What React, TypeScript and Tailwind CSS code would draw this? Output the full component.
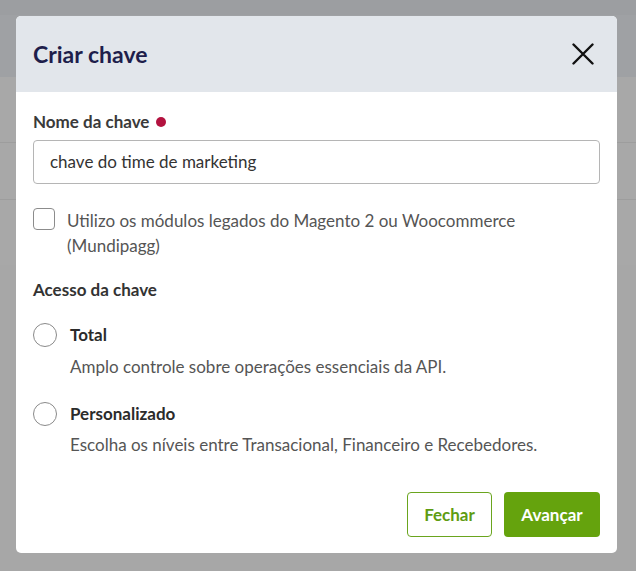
import React from "react";

export default function App() {
  return (
    <div
      className="relative h-[571px] w-full overflow-hidden bg-[#a7a7a7]"
      style={{ fontFamily: "Lato, 'Noto Sans', sans-serif" }}
    >
      {/* dimmed page behind */}
      <div className="h-[15px] bg-[#9c9ea1]" />
      <div className="h-[62px] bg-[#9fa1a4]" />
      <div className="h-[66px] border-b border-[#9d9d9d] bg-[#a8a8a8]" />
      <div className="h-[57px] border-b border-[#9d9d9d] bg-[#a8a8a8]" />
      <div className="h-[65px] bg-[#a8a8a8]" />

      {/* modal */}
      <div className="absolute left-[16px] top-[16px] flex h-[537px] w-[601px] flex-col overflow-hidden rounded-[5px] bg-white">
        <div className="flex h-[76px] shrink-0 items-center justify-between bg-[#e2e6eb] pl-[17px] pr-[22px]">
          <h2 className="text-[23px] font-bold text-[#1e1e4b]">Criar chave</h2>
          <button className="flex h-[24px] w-[24px] items-center justify-center">
            <svg width="22" height="22" viewBox="0 0 22 22" fill="none">
              <path d="M1.5 1.5 L20.5 20.5 M20.5 1.5 L1.5 20.5" stroke="#111" strokeWidth="2.4" strokeLinecap="round" />
            </svg>
          </button>
        </div>

        <div className="flex flex-1 flex-col px-[17px] pt-[18px] pb-[16px]">
          <div className="flex h-[24px] items-center gap-[7px] text-[17px] font-bold text-[#3a3a3a]">
            <span>Nome da chave</span>
            <span className="h-[10px] w-[10px] rounded-full bg-[#b3123f]" />
          </div>
          <div className="mt-[6px] flex h-[44px] items-center rounded-[4px] border border-[#b5b5b5] px-[16px] text-[17px] text-[#333333]">
            chave do time de marketing
          </div>

          <div className="mt-[24px] flex gap-[12px]">
            <span className="h-[22px] w-[22px] shrink-0 rounded-[4px] border-[1.5px] border-[#8c8c8c]" />
            <p className="text-[17px] leading-[25px] text-[#555555]">
              Utilizo os módulos legados do Magento 2 ou Woocommerce
              <br />
              (Mundipagg)
            </p>
          </div>

          <div className="mt-[20px] h-[24px] text-[17px] font-bold leading-[24px] text-[#333333]">
            Acesso da chave
          </div>

          <div className="mt-[21px] flex flex-col">
            <div className="flex items-center gap-[13px]">
              <span className="h-[24px] w-[24px] shrink-0 rounded-full border-[1.5px] border-[#8a8a8a]" />
              <span className="text-[17px] font-bold leading-[24px] text-[#2b2b2b]">Total</span>
            </div>
            <p className="mt-[8px] pl-[37px] text-[17px] leading-[24px] text-[#555555]">
              Amplo controle sobre operações essenciais da API.
            </p>
          </div>

          <div className="mt-[23px] flex flex-col">
            <div className="flex items-center gap-[13px]">
              <span className="h-[24px] w-[24px] shrink-0 rounded-full border-[1.5px] border-[#8a8a8a]" />
              <span className="text-[17px] font-bold leading-[24px] text-[#2b2b2b]">Personalizado</span>
            </div>
            <p className="mt-[7px] pl-[37px] text-[17px] leading-[24px] text-[#555555]">
              Escolha os níveis entre Transacional, Financeiro e Recebedores.
            </p>
          </div>

          <div className="mt-auto flex justify-end gap-[12px]">
            <button className="h-[45px] w-[85px] rounded-[4px] border-[1.5px] border-[#6aa51e] text-[17px] font-bold text-[#5f9c12]">
              Fechar
            </button>
            <button className="h-[45px] w-[96px] rounded-[4px] bg-[#65a30d] text-[17px] font-bold text-white">
              Avançar
            </button>
          </div>
        </div>
      </div>
    </div>
  );
}
